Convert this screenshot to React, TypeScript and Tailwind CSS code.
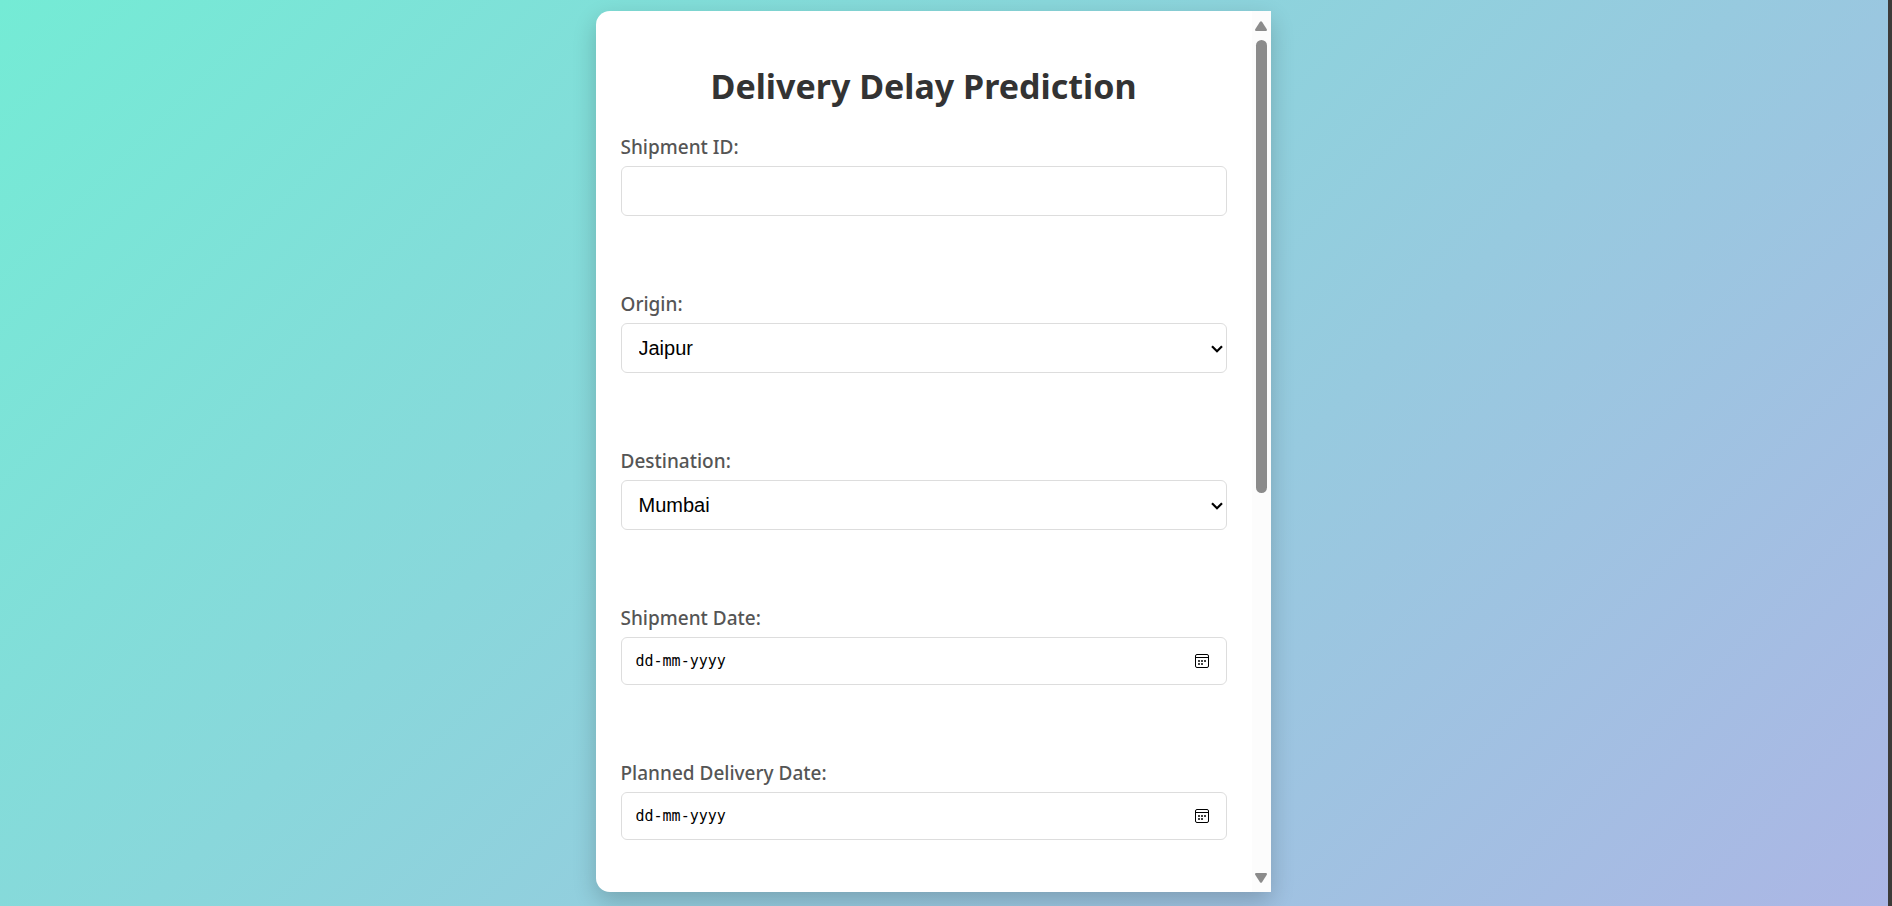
import React, { useState } from 'react';

const CITIES = ["Jaipur", "Mumbai", "Delhi", "Bangalore", "Chennai", "Kolkata", "Hyderabad"];

interface FieldProps {
  id: string;
  label: string;
  children: React.ReactNode;
}

const Field: React.FC<FieldProps> = ({ id, label, children }) => (
  <div>
    <label htmlFor={id} className="mb-[5px] block text-[19px] leading-7 font-medium text-[#555]">
      {label}
    </label>
    {children}
  </div>
);

interface CitySelectProps {
  id: string;
  value: string;
  onChange: (value: string) => void;
}

const CitySelect: React.FC<CitySelectProps> = ({ id, value, onChange }) => (
  <div className="relative">
    <select
      id={id}
      value={value}
      onChange={(e) => onChange(e.target.value)}
      className="block h-[50px] w-full appearance-none rounded-md border border-[#ddd] bg-white px-[17px] font-['Liberation_Sans',Arial,sans-serif] text-xl text-black"
    >
      {CITIES.map((city) => (
        <option key={city} value={city}>{city}</option>
      ))}
    </select>
    <svg
      viewBox="0 0 12 8"
      className="pointer-events-none absolute top-[22px] right-1 h-2 w-3"
      fill="none"
      stroke="black"
      strokeWidth="2.200"
      aria-hidden="true"
    >
      <path d="M1 1.200l5 5 5-5" />
    </svg>
  </div>
);

const CalendarIcon = () => (
  <svg viewBox="0 0 14 14" className="size-3.5" fill="none" aria-hidden="true">
    <rect x="0.5" y="0.5" width="13" height="13" rx="1.5" stroke="black" />
    <path d="M1 3.5h12" stroke="black" />
    <path d="M3 6h2v2H3zM6 6h2v2H6zM9 6h2v2H9zM3 9h2v2H3zM6 9h2v2H6z" fill="#444" />
  </svg>
);

interface DateFieldProps {
  id: string;
  value: string;
  onChange: (value: string) => void;
}

const DateField: React.FC<DateFieldProps> = ({ id, value, onChange }) => (
  <div className="flex h-12 items-center rounded-md border border-[#ddd] bg-white pr-[17px] pl-3.5">
    <input
      id={id}
      type="text"
      value={value}
      placeholder="dd-mm-yyyy"
      onChange={(e) => onChange(e.target.value)}
      className="min-w-0 flex-1 font-['DejaVu_Sans_Mono',monospace] text-[15px] text-black outline-none placeholder:text-black"
    />
    <button type="button" aria-label="Open calendar">
      <CalendarIcon />
    </button>
  </div>
);

const ScrollRail = () => (
  <div className="flex w-[19px] shrink-0 flex-col items-center bg-[#fcfcfc] pt-2.5 pb-[9px]" aria-hidden="true">
    <svg viewBox="0 0 12 10" className="h-2.5 w-3 shrink-0" fill="#8b8b8b">
      <path d="M5 .8Q6-.5 7 .8l4.8 7.4Q12.3 10 11 10H1Q-.3 10 .2 8.2z" />
    </svg>
    <div className="my-[9px] min-h-0 w-full flex-1">
      <div className="mx-auto h-[55%] w-[11px] rounded-full bg-[#8b8b8b]" />
    </div>
    <svg viewBox="0 0 12 10" className="h-2.5 w-3 shrink-0" fill="#8b8b8b">
      <path d="M5 9.2Q6 10.5 7 9.2l4.8-7.4Q12.3 0 11 0H1Q-.3 0 .2 1.8z" />
    </svg>
  </div>
);

export default function App() {
  const [shipmentId, setShipmentId] = useState("");
  const [origin, setOrigin] = useState("Jaipur");
  const [destination, setDestination] = useState("Mumbai");
  const [shipmentDate, setShipmentDate] = useState("");
  const [plannedDate, setPlannedDate] = useState("");

  return (
    <div className="flex h-screen font-['Segoe_UI','Noto_Sans',sans-serif]">
      <main className="flex flex-1 flex-col items-center bg-[linear-gradient(135deg,#74ebd5,#acb6e5)] pt-[11px] pr-[22px] pb-3.5">
        <div className="flex min-h-0 w-full max-w-[675px] flex-1 overflow-hidden rounded-l-[14px] bg-white shadow-[0_9px_23px_rgba(0,0,0,0.2)]">
          <form
            className="min-w-0 flex-1 overflow-y-auto px-[25px] pt-[50px] [scrollbar-width:none]"
            onSubmit={(e) => e.preventDefault()}
          >
            <h1 className="mb-[22px] text-center text-[34px] leading-[50px] font-bold text-[#333]">
              Delivery Delay Prediction
            </h1>
            <div className="flex flex-col gap-[74px]">
              <Field id="shipment-id" label="Shipment ID:">
                <input
                  id="shipment-id"
                  type="text"
                  value={shipmentId}
                  onChange={(e) => setShipmentId(e.target.value)}
                  className="block h-[50px] w-full rounded-md border border-[#ddd] bg-white px-[13px] font-['Liberation_Sans',Arial,sans-serif] text-xl text-black"
                />
              </Field>
              <Field id="origin" label="Origin:">
                <CitySelect id="origin" value={origin} onChange={setOrigin} />
              </Field>
              <Field id="destination" label="Destination:">
                <CitySelect id="destination" value={destination} onChange={setDestination} />
              </Field>
              <Field id="shipment-date" label="Shipment Date:">
                <DateField id="shipment-date" value={shipmentDate} onChange={setShipmentDate} />
              </Field>
              <Field id="planned-date" label="Planned Delivery Date:">
                <DateField id="planned-date" value={plannedDate} onChange={setPlannedDate} />
              </Field>
            </div>
          </form>
          <ScrollRail />
        </div>
      </main>
      <div className="w-1 shrink-0 bg-[#3c3b39]" />
    </div>
  );
}
